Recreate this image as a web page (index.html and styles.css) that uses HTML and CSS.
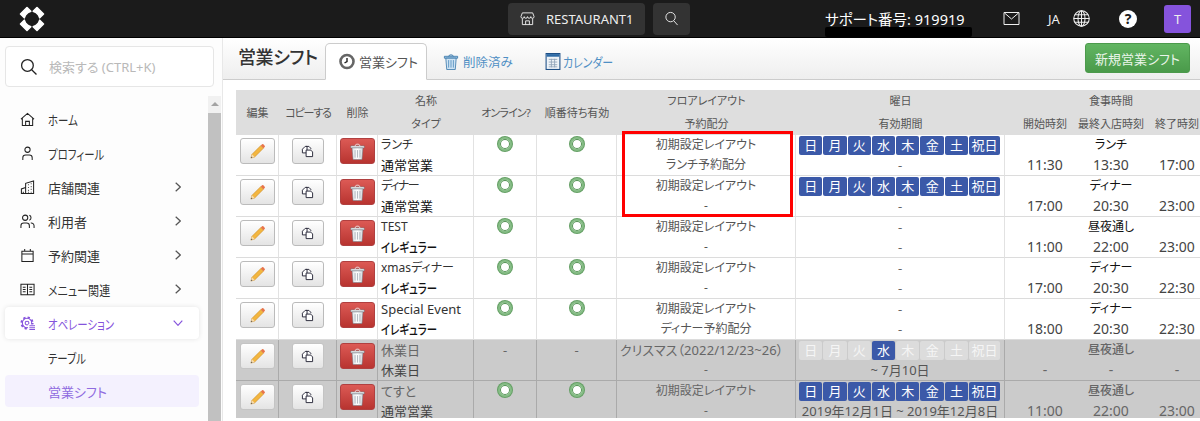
FILE: index.html
```html
<!DOCTYPE html>
<html lang="ja">
<head>
<meta charset="utf-8">
<title>営業シフト</title>
<link rel="stylesheet" href="styles.css">
</head>
<body>
<svg class="defs" width="0" height="0" aria-hidden="true">
  <defs>
    <linearGradient id="can" x1="0" x2="1" y1="0" y2="0"><stop offset="0" stop-color="#dfe3e8"/><stop offset=".5" stop-color="#fff"/><stop offset="1" stop-color="#d2d7dc"/></linearGradient>
    <symbol id="i-pencil" viewBox="0 0 18 18">
      <path d="M2 16l1.200-4L12.500 2.700l2.800 2.800L6 14.800z" fill="#f3b63f" stroke="#c98a2a" stroke-width=".6"/>
      <path d="M12.500 2.700l1.300-1.300a1 1 0 0 1 1.400 0l1.400 1.400a1 1 0 0 1 0 1.400l-1.300 1.300z" fill="#e8744a"/>
      <path d="M2 16l1.200-4L6 14.800z" fill="#f6dcb0"/>
      <path d="M2 16l.5-1.700 1.200 1.200z" fill="#555"/>
    </symbol>
    <symbol id="i-copy" viewBox="0 0 14 14">
      <path d="M5.500 1.500h3l2 2v1" fill="#fff" stroke="#223" stroke-width="1"/>
      <path d="M1.500 4.500l3-3h2v7h-5z" fill="#fff" stroke="#223" stroke-width="1"/>
      <path d="M5.500 5.500h5l2 2v5h-7z" fill="#fff" stroke="#223" stroke-width="1"/>
    </symbol>
    <symbol id="i-trash" viewBox="0 0 16 18">
      <path d="M.8 3h14.400v2.200H.8z" fill="#f2f4f6" stroke="#56616c" stroke-width=".5"/>
      <path d="M5.500 3c0-2.400 5-2.400 5 0" fill="none" stroke="#eef0f2"/>
      <path d="M2.200 5.200h11.600l-1 12.300H3.200z" fill="url(#can)" stroke="#6a7580" stroke-width=".5"/>
      <path d="M5.400 7.500v8M8 7.500v8M10.600 7.500v8" stroke="#8f99a3" stroke-width=".7"/>
    </symbol>
    <symbol id="i-ttrash" viewBox="0 0 16 18">
      <path d="M1 3.500h14v2H1z" fill="#a7cbe6" stroke="#2b6ea5" stroke-width=".8"/>
      <path d="M5.500 3.500c0-2 5-2 5 0" fill="none" stroke="#2b6ea5"/>
      <path d="M2.500 5.500h11l-1 12h-9z" fill="#cfe3f3" stroke="#2b6ea5" stroke-width=".8"/>
      <path d="M5.500 7.500v8M8 7.500v8M10.500 7.500v8" stroke="#4f8cbe" stroke-width=".9"/>
    </symbol>
    <symbol id="i-clock" viewBox="0 0 16 16">
      <circle cx="8" cy="8" r="6.500" fill="#fff" stroke="#666" stroke-width="2.600"/>
      <path d="M8 4.500V8L5.500 9.500" fill="none" stroke="#222" stroke-width="1.400"/>
    </symbol>
    <symbol id="i-cal" viewBox="0 0 14 16">
      <rect x=".5" y=".5" width="13" height="15" fill="#eef3f8" stroke="#1d4f86"/>
      <path d="M1 1h12v2.500H1z" fill="#2d6aa6"/>
      <path d="M3 6h8M3 8.500h8M3 11h8M3 13h8M5.500 5.500v8M8.500 5.500v8" stroke="#8fa3b8" stroke-width=".8"/>
    </symbol>
    <symbol id="i-home" viewBox="0 0 16 16"><path d="M1 7.500L8 1.500l7 6M2.500 6.500v8h11v-8M6 14.500v-4.500h4v4.500"/></symbol>
    <symbol id="i-user" viewBox="0 0 16 16"><circle cx="8" cy="4" r="2.800"/><path d="M3 15v-2.500a3 3 0 0 1 3-3h4a3 3 0 0 1 3 3V15"/></symbol>
    <symbol id="i-store" viewBox="0 0 16 16"><path d="M6 14.500V3.500L14.500 1v13.500zM6 8L1.500 9.500v5H6M3.500 14.500v-2"/><path d="M8.500 5h.8M11.500 4h.8M8.500 8h.8M11.500 7h.8M8.500 11h.8M11.500 10h.8M8.500 13h.8M11.500 13h.8" stroke-width="1.200"/></symbol>
    <symbol id="i-users" viewBox="0 0 16 16"><circle cx="5.500" cy="4" r="2.800"/><path d="M1 15v-2.500a3 3 0 0 1 3-3h3a3 3 0 0 1 3 3V15M10 1.400a2.800 2.800 0 0 1 0 5.200M11.500 9.600a3 3 0 0 1 3.500 3V15"/></symbol>
    <symbol id="i-date" viewBox="0 0 16 16"><path d="M2 3.500h12v11H2zM2 6.500h12M5 1v3M11 1v3"/></symbol>
    <symbol id="i-menu" viewBox="0 0 16 16"><path d="M1 2.500h14v11H1zM8 2.500v11M3 5.500h3M3 8h3M3 10.500h3M10 5.500h3M10 8h3M10 10.500h3"/></symbol>
    <symbol id="i-gear" viewBox="0 0 16 16">
      <circle cx="7.500" cy="7.500" r="5"/>
      <circle cx="7.500" cy="7.500" r="6" stroke-width="2" stroke-dasharray="2.400 2.300"/>
      <circle cx="7.500" cy="7.500" r="2"/>
      <path d="M8.500 9h7.500v7H8.500z" fill="#fff" stroke="none"/>
      <path d="M10 10.500h6M10 12.500h6M10 14.500h6"/>
    </symbol>
    <symbol id="i-chev" viewBox="0 0 6 10"><path d="M.7.700L5.300 5 .7 9.300"/></symbol>
    <symbol id="i-chevd" viewBox="0 0 10 6"><path d="M.7.700L5 5.300 9.300.7"/></symbol>
  </defs>
</svg>

<header class="topbar">
  <svg class="logo" viewBox="0 0 26 26"><path d="M8 1.500L11.800 5.300 9 6.500 6.500 9 5.300 11.800 1.500 8zM18 1.500L14.200 5.300 17 6.500 19.500 9 20.700 11.800 24.500 8zM8 24.500L11.800 20.700 9 19.500 6.500 17 5.300 14.200 1.500 18zM18 24.500L14.200 20.700 17 19.500 19.500 17 20.700 14.200 24.500 18z" fill="#fff" stroke="#fff" stroke-width="1.600" stroke-linejoin="round"/></svg>
  <div class="top-center">
    <button class="top-btn top-rest">
      <svg class="top-ico" viewBox="0 0 16 16"><path d="M2.500 2h11L15 6a1.750 1.750 0 0 1-3.500 0 1.750 1.750 0 0 1-3.500 0 1.750 1.750 0 0 1-3.500 0 1.750 1.750 0 0 1-3.500 0zM2.500 8v6.500h11V8M6 14.500v-4h4v4"/></svg>
      <span>RESTAURANT1</span>
    </button>
    <button class="top-btn top-search">
      <svg class="top-ico" viewBox="0 0 16 16"><circle cx="7" cy="6.500" r="5"/><path d="M10.500 10.500l4 4.500"/></svg>
    </button>
  </div>
  <div class="support">サポート番号: 919919<span class="support-mask"></span></div>
  <svg class="top-mail" viewBox="0 0 16 13"><path d="M.5.500h15v12H.5zM1 1l7 6 7-6"/></svg>
  <span class="top-lang">JA</span>
  <svg class="top-globe" viewBox="0 0 16 16"><circle cx="8" cy="8" r="7.300"/><ellipse cx="8" cy="8" rx="3.300" ry="7.300"/><path d="M8 .7v14.600M.7 8h14.600M1.700 4.500h12.600M1.700 11.500h12.600"/></svg>
  <span class="top-help">?</span>
  <span class="avatar">T</span>
</header>

<div class="body-row">
  <aside class="sidebar">
    <div class="search-wrap">
      <div class="search-box">
        <svg class="search-ico" viewBox="0 0 16 16"><circle cx="7" cy="7" r="5.500"/><path d="M11 11l4.500 4.500"/></svg>
        <span>検索する (CTRL+K)</span>
      </div>
    </div>
    <div class="side-scroll">
      <nav class="nav">
        <a class="nav-item"><svg class="nav-ico"><use href="#i-home"/></svg><span class="kana">ホーム</span></a>
        <a class="nav-item"><svg class="nav-ico"><use href="#i-user"/></svg><span class="kana">プロフィール</span></a>
        <a class="nav-item"><svg class="nav-ico"><use href="#i-store"/></svg><span>店舗関連</span><svg class="nav-chev"><use href="#i-chev"/></svg></a>
        <a class="nav-item"><svg class="nav-ico"><use href="#i-users"/></svg><span>利用者</span><svg class="nav-chev"><use href="#i-chev"/></svg></a>
        <a class="nav-item"><svg class="nav-ico"><use href="#i-date"/></svg><span>予約関連</span><svg class="nav-chev"><use href="#i-chev"/></svg></a>
        <a class="nav-item"><svg class="nav-ico"><use href="#i-menu"/></svg><span class="kana-mix">メニュー関連</span><svg class="nav-chev"><use href="#i-chev"/></svg></a>
        <a class="nav-item nav-open"><svg class="nav-ico"><use href="#i-gear"/></svg><span class="kana">オペレーション</span><svg class="nav-chevd"><use href="#i-chevd"/></svg></a>
        <a class="nav-item nav-sub"><span class="kana">テーブル</span></a>
        <a class="nav-item nav-sub nav-current"><span>営業シフト</span></a>
      </nav>
      <div class="scrollbar"><span class="sb-arrow"></span><span class="sb-thumb"></span></div>
    </div>
  </aside>

  <main class="main">
    <div class="page-head">
      <h1 class="page-title">営業シフト</h1>
      <div class="tabs">
        <a class="tab tab-active"><svg class="tab-ico"><use href="#i-clock"/></svg>営業シフト</a>
        <a class="tab tab-del"><svg class="tab-ico"><use href="#i-ttrash"/></svg>削除済み</a>
        <a class="tab tab-cal"><svg class="tab-ico"><use href="#i-cal"/></svg><span class="kana-tab">カレンダー</span></a>
      </div>
      <button class="btn-new">新規営業シフト</button>
    </div>
    <div class="table-wrap">
      <table class="shifts">
        <colgroup>
          <col class="c-edit"><col class="c-copy"><col class="c-del"><col class="c-name"><col class="c-on"><col class="c-wait"><col class="c-layout"><col class="c-days"><col class="c-t1"><col class="c-t2"><col class="c-t3">
        </colgroup>
        <thead>
          <tr>
            <th rowspan="2">編集</th><th rowspan="2" class="th-copy">コピーする</th><th rowspan="2">削除</th><th>名称</th><th rowspan="2" class="th-on">オンライン?</th><th rowspan="2">順番待ち有効</th><th>フロアレイアウト</th><th>曜日</th><th colspan="3" class="t-start">食事時間</th>
          </tr>
          <tr class="head2">
            <th>タイプ</th><th>予約配分</th><th>有効期間</th><th class="t-start">開始時刻</th><th>最終入店時刻</th><th>終了時刻</th>
          </tr>
        </thead>
        <tbody>
          <tr>
            <td rowspan="2" class="act"><button class="b b-edit"><svg><use href="#i-pencil"/></svg></button></td>
            <td rowspan="2" class="act"><button class="b b-copy"><svg><use href="#i-copy"/></svg></button></td>
            <td rowspan="2" class="act"><button class="b b-del"><svg><use href="#i-trash"/></svg></button></td>
            <td class="name">ランチ</td>
            <td rowspan="2" class="flag"><span class="ok"></span></td>
            <td rowspan="2" class="flag"><span class="ok"></span></td>
            <td class="lay">初期設定レイアウト</td>
            <td class="days"><div class="day-row"><span class="d">日</span><span class="d">月</span><span class="d">火</span><span class="d">水</span><span class="d">木</span><span class="d">金</span><span class="d">土</span><span class="d d-h">祝日</span></div></td>
            <td colspan="3" class="meal t-start">ランチ</td>
          </tr>
          <tr class="low">
            <td class="type">通常営業</td><td class="lay">ランチ予約配分</td><td class="period">-</td><td class="time t-start">11:30</td><td class="time">13:30</td><td class="time">17:00</td>
          </tr>
          <tr>
            <td rowspan="2" class="act"><button class="b b-edit"><svg><use href="#i-pencil"/></svg></button></td>
            <td rowspan="2" class="act"><button class="b b-copy"><svg><use href="#i-copy"/></svg></button></td>
            <td rowspan="2" class="act"><button class="b b-del"><svg><use href="#i-trash"/></svg></button></td>
            <td class="name name-kana">ディナー</td>
            <td rowspan="2" class="flag"><span class="ok"></span></td>
            <td rowspan="2" class="flag"><span class="ok"></span></td>
            <td class="lay">初期設定レイアウト</td>
            <td class="days"><div class="day-row"><span class="d">日</span><span class="d">月</span><span class="d">火</span><span class="d">水</span><span class="d">木</span><span class="d">金</span><span class="d">土</span><span class="d d-h">祝日</span></div></td>
            <td colspan="3" class="meal t-start">ディナー</td>
          </tr>
          <tr class="low">
            <td class="type">通常営業</td><td class="lay">-</td><td class="period">-</td><td class="time t-start">17:00</td><td class="time">20:30</td><td class="time">23:00</td>
          </tr>
          <tr>
            <td rowspan="2" class="act"><button class="b b-edit"><svg><use href="#i-pencil"/></svg></button></td>
            <td rowspan="2" class="act"><button class="b b-copy"><svg><use href="#i-copy"/></svg></button></td>
            <td rowspan="2" class="act"><button class="b b-del"><svg><use href="#i-trash"/></svg></button></td>
            <td class="name">TEST</td>
            <td rowspan="2" class="flag"><span class="ok"></span></td>
            <td rowspan="2" class="flag"><span class="ok"></span></td>
            <td class="lay">初期設定レイアウト</td>
            <td class="period">-</td>
            <td colspan="3" class="meal t-start">昼夜通し</td>
          </tr>
          <tr class="low">
            <td class="type"><span class="type-kana">イレギュラー</span></td><td class="lay">-</td><td class="period">-</td><td class="time t-start">11:00</td><td class="time">22:00</td><td class="time">23:00</td>
          </tr>
          <tr>
            <td rowspan="2" class="act"><button class="b b-edit"><svg><use href="#i-pencil"/></svg></button></td>
            <td rowspan="2" class="act"><button class="b b-copy"><svg><use href="#i-copy"/></svg></button></td>
            <td rowspan="2" class="act"><button class="b b-del"><svg><use href="#i-trash"/></svg></button></td>
            <td class="name">xmasディナー</td>
            <td rowspan="2" class="flag"><span class="ok"></span></td>
            <td rowspan="2" class="flag"><span class="ok"></span></td>
            <td class="lay">初期設定レイアウト</td>
            <td class="period">-</td>
            <td colspan="3" class="meal t-start">ディナー</td>
          </tr>
          <tr class="low">
            <td class="type"><span class="type-kana">イレギュラー</span></td><td class="lay">-</td><td class="period">-</td><td class="time t-start">17:00</td><td class="time">20:30</td><td class="time">22:30</td>
          </tr>
          <tr>
            <td rowspan="2" class="act"><button class="b b-edit"><svg><use href="#i-pencil"/></svg></button></td>
            <td rowspan="2" class="act"><button class="b b-copy"><svg><use href="#i-copy"/></svg></button></td>
            <td rowspan="2" class="act"><button class="b b-del"><svg><use href="#i-trash"/></svg></button></td>
            <td class="name name-latin">Special Event</td>
            <td rowspan="2" class="flag"><span class="ok"></span></td>
            <td rowspan="2" class="flag"><span class="ok"></span></td>
            <td class="lay">初期設定レイアウト</td>
            <td class="period">-</td>
            <td colspan="3" class="meal t-start">ディナー</td>
          </tr>
          <tr class="low">
            <td class="type"><span class="type-kana">イレギュラー</span></td><td class="lay">ディナー予約配分</td><td class="period">-</td><td class="time t-start">18:00</td><td class="time">20:30</td><td class="time">22:30</td>
          </tr>
          <tr class="off">
            <td rowspan="2" class="act"><button class="b b-edit"><svg><use href="#i-pencil"/></svg></button></td>
            <td rowspan="2" class="act"><button class="b b-copy"><svg><use href="#i-copy"/></svg></button></td>
            <td rowspan="2" class="act"><button class="b b-del"><svg><use href="#i-trash"/></svg></button></td>
            <td class="name name-kanji">休業日</td>
            <td rowspan="2" class="flag flag-dash">-</td>
            <td rowspan="2" class="flag flag-dash">-</td>
            <td class="lay lay-tight">クリスマス（2022/12/23~26）</td>
            <td class="days"><div class="day-row"><span class="d d-dim">日</span><span class="d d-dim">月</span><span class="d d-dim">火</span><span class="d">水</span><span class="d d-dim">木</span><span class="d d-dim">金</span><span class="d d-dim">土</span><span class="d d-h d-dim">祝日</span></div></td>
            <td colspan="3" class="meal t-start">昼夜通し</td>
          </tr>
          <tr class="low off">
            <td class="type">休業日</td><td class="lay">-</td><td class="period">~ 7月10日</td><td class="time t-start">-</td><td class="time">-</td><td class="time">-</td>
          </tr>
          <tr class="off">
            <td rowspan="2" class="act"><button class="b b-edit"><svg><use href="#i-pencil"/></svg></button></td>
            <td rowspan="2" class="act"><button class="b b-copy"><svg><use href="#i-copy"/></svg></button></td>
            <td rowspan="2" class="act"><button class="b b-del"><svg><use href="#i-trash"/></svg></button></td>
            <td class="name name-kanji">てすと</td>
            <td rowspan="2" class="flag"><span class="ok"></span></td>
            <td rowspan="2" class="flag"><span class="ok"></span></td>
            <td class="lay">初期設定レイアウト</td>
            <td class="days"><div class="day-row"><span class="d">日</span><span class="d">月</span><span class="d">火</span><span class="d">水</span><span class="d">木</span><span class="d">金</span><span class="d">土</span><span class="d d-h">祝日</span></div></td>
            <td colspan="3" class="meal t-start">昼夜通し</td>
          </tr>
          <tr class="low off">
            <td class="type">通常営業</td><td class="lay">-</td><td class="period">2019年12月1日 ~ 2019年12月8日</td><td class="time t-start">11:00</td><td class="time">22:00</td><td class="time">23:00</td>
          </tr>
        </tbody>
      </table>
      <div class="highlight"></div>
    </div>
  </main>
</div>
</body>
</html>
```

FILE: styles.css
```css
* { box-sizing: border-box; }
html, body { margin: 0; height: 421px; overflow: hidden; }
body {
  background: #fff;
  color: #333;
  font-family: "Noto Sans", "Noto Sans CJK JP", sans-serif;
  font-size: 13px;
  font-feature-settings: "palt";
}
.defs { position: absolute; }

/* top bar */
.topbar {
  height: 38px;
  background: #1b1b1b;
  border-bottom: 1px solid #000;
  display: flex;
  align-items: center;
  color: #eee;
}
.logo { width: 26px; height: 26px; margin-left: 19px; }
.top-center { display: flex; gap: 8px; margin-left: 463px; }
.top-btn {
  height: 32px;
  background: #333;
  border: 0;
  border-radius: 4px;
  color: #eee;
  display: flex;
  align-items: center;
  font: inherit;
  font-size: 13px;
  padding: 0;
}
.top-rest { width: 137px; padding-left: 12px; gap: 11px; }
.top-search { width: 37px; justify-content: center; }
.top-ico, .top-mail, .top-globe, .search-ico {
  fill: none;
  stroke: currentColor;
  stroke-width: 1;
}
.top-ico { width: 15px; height: 15px; flex: none; }
.support {
  position: relative;
  margin-left: 135px;
  width: 147px;
  font-size: 14.500px;
  white-space: nowrap;
  color: #fff;
  line-height: 38px;
}
.support-mask {
  position: absolute;
  left: 0;
  top: 27px;
  width: 147px;
  height: 10px;
  background: #000;
  border-radius: 2px;
}
.top-mail { width: 17px; height: 13px; margin-left: 31px; }
.top-lang { margin-left: 28px; font-size: 13px; width: 16px; }
.top-globe { width: 17px; height: 17px; margin-left: 9px; }
.top-help {
  width: 18px;
  height: 18px;
  margin-left: 29px;
  border-radius: 50%;
  background: #fff;
  color: #1b1b1b;
  font-size: 14px;
  font-weight: 700;
  line-height: 18px;
  text-align: center;
}
.avatar {
  width: 27px;
  height: 28px;
  margin-left: 27px;
  border-radius: 3px;
  background: #8553dc;
  color: #eee;
  font-size: 13px;
  line-height: 28px;
  text-align: center;
}

.body-row { display: flex; height: 383px; }

/* sidebar */
.sidebar {
  width: 223px;
  flex: none;
  background: #fdfdfd;
  border-right: 1px solid #e8e8e8;
  display: flex;
  flex-direction: column;
}
.search-wrap { padding: 8px 8px 0 5px; height: 58px; }
.search-box {
  height: 41px;
  border: 1px solid #e6e6e6;
  border-radius: 4px;
  background: #fff;
  display: flex;
  align-items: center;
  padding-left: 14px;
  gap: 12px;
  color: #b9b9b9;
  font-size: 13px;
}
.search-ico { width: 17px; height: 17px; color: #222; stroke-width: 1.2; }
.side-scroll { flex: 1; display: flex; min-height: 0; }
.nav { flex: 1; padding: 7px 9px 0 5px; display: flex; flex-direction: column; gap: 2px; }
.nav-item {
  height: 32px;
  display: flex;
  align-items: center;
  padding-left: 15px;
  gap: 13px;
  color: #333;
  border-radius: 4px;
  white-space: nowrap;
}
.kana, .kana-mix, .kana-tab, .type-kana {
  display: inline-block;
  transform-origin: left center;
}
.kana, .type-kana { transform: scaleX(.8); }
.kana-mix { transform: scaleX(.85); }
.kana-tab { transform: scaleX(.84); }
.nav-ico {
  width: 15px;
  height: 15px;
  flex: none;
  fill: none;
  stroke: #222;
  stroke-width: 1.100;
}
.nav-chev {
  width: 6px;
  height: 10px;
  margin-left: auto;
  margin-right: 18px;
  fill: none;
  stroke: #555;
  stroke-width: 1.200;
}
.nav-chevd {
  width: 10px;
  height: 6px;
  margin-left: auto;
  margin-right: 16px;
  fill: none;
  stroke: #8553dc;
  stroke-width: 1.200;
}
.nav-open { background: #fff; color: #8553dc; box-shadow: 0 0 5px rgba(0, 0, 0, .1); }
.nav-open .nav-ico { stroke: #8553dc; }
.nav-sub { padding-left: 43px; }
.nav-current { background: #f4f1fe; color: #8f6be0; }
.scrollbar { width: 13px; margin-right: 1px; display: flex; flex-direction: column; background: #f1f1f1; }
.sb-arrow {
  height: 17px;
  background: #f1f1f1;
  position: relative;
}
.sb-arrow::before {
  content: "";
  position: absolute;
  left: 3px;
  top: 6px;
  border: 4px solid transparent;
  border-top: 0;
  border-bottom: 4px solid #a3a3a3;
}
.sb-thumb { flex: 1; background: #c1c1c1; }

/* main */
.main { flex: 1; min-width: 0; overflow: hidden; }
.page-head {
  height: 42px;
  background: linear-gradient(#fff, #eee);
  border-bottom: 1px solid #ccc;
  display: flex;
  align-items: flex-end;
  padding-left: 15px;
}
.page-title {
  margin: 0 9px 0 0;
  width: 78px;
  font-size: 18px;
  font-weight: 500;
  line-height: 38px;
  letter-spacing: -.4px;
  white-space: nowrap;
  align-self: flex-start;
  color: #333;
}
.tabs { display: flex; align-self: flex-end; }
.tab {
  height: 37px;
  display: flex;
  align-items: center;
  gap: 4px;
  color: #4f8fc4;
  margin-bottom: -1px;
  border: 1px solid transparent;
  white-space: nowrap;
}
.tab-active {
  width: 102px;
  padding: 0 0 0 13px;
  background: #fff;
  color: #555;
  border-color: #ccc #ccc #fff;
  border-radius: 5px 5px 0 0;
}
.tab-del { width: 117px; padding-left: 15px; font-size: 12.500px; }
.tab-cal { padding-left: 0; gap: 2px; font-size: 13px; }
.tab-ico { width: 16px; height: 17px; flex: none; }
.btn-new {
  margin-left: auto;
  margin-right: 10px;
  align-self: flex-start;
  margin-top: 5px;
  width: 105px;
  height: 30px;
  border: 1px solid #4c9a4c;
  border-radius: 3px;
  background: linear-gradient(#62b562, #4a9a4a);
  color: #eaf5ea;
  font: inherit;
  font-size: 13px;
  padding: 0;
}

.table-wrap {
  position: relative;
  margin: 10px 0 0 13px;
  height: 328px;
  overflow: hidden;
}
.shifts {
  border-collapse: separate;
  border-spacing: 0;
  table-layout: fixed;
  width: 974px;
}
.c-edit { width: 43px; }
.c-copy { width: 58px; }
.c-del { width: 41px; }
.c-name { width: 96px; }
.c-on { width: 63px; }
.c-wait { width: 80px; }
.c-layout { width: 179px; }
.c-days { width: 209px; }
.c-t1 { width: 73px; }
.c-t2 { width: 66px; }
.c-t3 { width: 66px; }

th {
  background: #dedede;
  font-size: 11px;
  font-weight: 400;
  color: #555;
  text-align: center;
  padding: 0;
  height: 22px;
  line-height: 22px;
  white-space: nowrap;
}
.head2 th { height: 23px; line-height: 23px; }
.th-copy { letter-spacing: -1.200px; }
.th-on { letter-spacing: -.8px; }
td {
  padding: 0;
  line-height: 20px;
  height: 20px;
  white-space: nowrap;
  text-align: center;
  border-right: 1px solid #e2e2e2;
  color: #555;
}
td[rowspan], .low td { border-bottom: 1px solid #dcdcdc; }
td.meal, td.time { border-right: 0; }
.t-start { padding-left: 7px; }
.name { text-align: left; padding-left: 3px; color: #333; font-size: 12px; }
.name-latin, .name-kanji { font-size: 13px; }
.name-kana { letter-spacing: -1.400px; }
.type { text-align: left; padding-left: 3px; color: #111; font-size: 13px; }
.type-kana { font-weight: 500; }
.lay { font-size: 12px; }
.lay-tight { text-align: left; padding-left: 3px; font-size: 13px; letter-spacing: .1px; }
.period { font-size: 13px; color: #666; }
.meal { color: #111; font-size: 12px; }
.time { color: #444; font-size: 14px; }
.act { vertical-align: top; padding-top: 3px; }
.flag { vertical-align: top; padding-top: 2px; line-height: 16px; }
.flag-dash { color: #888; line-height: 20px; padding-top: 0; }
.ok {
  display: inline-block;
  width: 14px;
  height: 14px;
  border: 2px solid #86bd86;
  border-radius: 50%;
  box-shadow: inset 0 0 0 1px #4f8f4f, 0 0 0 1px #649f64;
  background: #fff;
}
.b {
  display: inline-flex;
  align-items: center;
  justify-content: center;
  height: 26px;
  padding: 0;
  border-radius: 3px;
  vertical-align: top;
}
.b-edit { width: 35px; border: 1px solid #bbb; background: linear-gradient(#fff, #e4e4e4); }
.b-copy { width: 32px; border: 1px solid #bbb; background: linear-gradient(#fff, #e4e4e4); }
.b-del { width: 35px; border: 1px solid #b04040; background: linear-gradient(#dc5a55, #b83430); }
.b-edit svg { width: 17px; height: 17px; }
.b-copy svg { width: 13px; height: 13px; }
.b-del svg { width: 15px; height: 17px; }

.day-row { display: flex; gap: 1px; padding: 1px 0 0 3px; }
.d {
  width: 23.300px;
  height: 19px;
  flex: none;
  background: #3b59a8;
  color: #fff;
  font-size: 13px;
  line-height: 19px;
  border-radius: 2px;
}
.d-h { width: 31px; }
.d-dim { background: #dcdcdc; color: #f5f5f5; }

.off td { background: #cbcbcb; color: #666; border-color: #aaa; }
.off .type { color: #444; }
.off .period { color: #555; }
.off .meal { color: #666; font-weight: 500; }
.off .b-edit, .off .b-copy { border-color: #c4c4c4; }

.highlight {
  position: absolute;
  left: 386px;
  top: 41px;
  width: 171px;
  height: 86px;
  border: 3px solid #f00;
}
```
